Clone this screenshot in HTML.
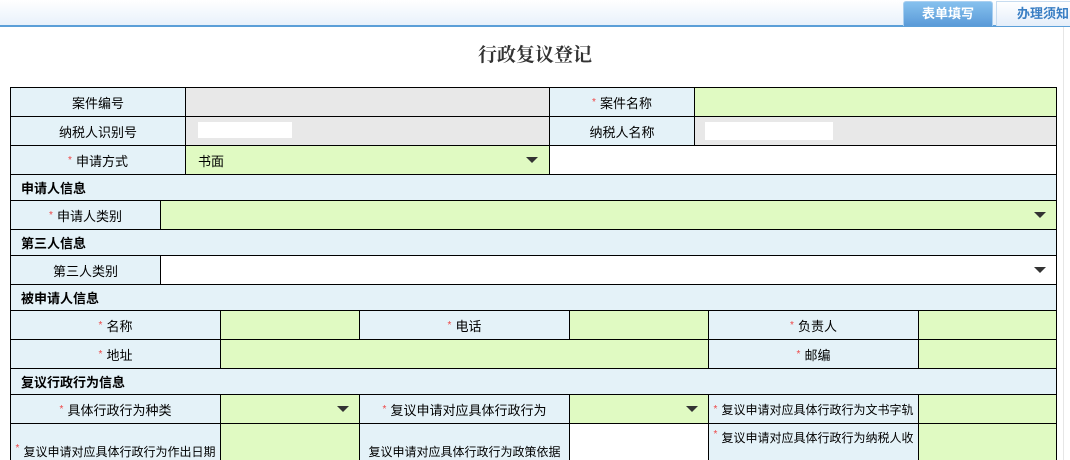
<!DOCTYPE html>
<html><head><meta charset="utf-8"><style>
*{margin:0;padding:0;box-sizing:border-box}
html,body{width:1070px;height:460px;overflow:hidden}
body{background:#fff;font-family:"Liberation Sans","Noto Sans CJK SC",sans-serif;font-size:13px;color:#000;position:relative}
.top{position:absolute;left:0;top:0;width:1070px;height:25px;background:linear-gradient(#fff,#e8f1fb)}
.line{position:absolute;left:0;top:25px;width:1070px;height:2px;background:#5b9fd8}
.t1{position:absolute;left:903px;top:1px;width:90px;height:25px;background:linear-gradient(#86c1ee,#5a9ad8);border:1px solid #a9cff0;border-bottom:none;border-radius:3px 3px 0 0;color:#fff;font-weight:bold;text-align:center;line-height:24px;font-size:13px}
.t2{position:absolute;left:996px;top:1px;width:80px;height:25px;background:linear-gradient(#fff,#e4eefa);border:1px solid #c7dcf0;border-bottom:none;color:#3a7fc4;font-weight:bold;line-height:24px;padding-left:20px;font-size:13px}
h1{position:absolute;left:0;width:1070px;top:40px;text-align:center;font-size:19px;font-weight:bold;color:#333;font-family:"Liberation Serif","Noto Serif CJK SC",serif}
.c{position:absolute;border:1px solid #000;display:flex;align-items:center;justify-content:center;white-space:nowrap;overflow:hidden}
.l{background:#e4f2f8}.g{background:#e0fac2}.y{background:#e8e8e8}.w{background:#fff}
.s{background:#e4f2f8;justify-content:flex-start;padding-left:10px;font-weight:bold}
.r{color:#e44;font-size:10px;margin-right:4px}
.sm{font-size:12px;letter-spacing:0}
.dd{position:absolute;width:0;height:0;border-left:6px solid transparent;border-right:6px solid transparent;border-top:6px solid #333}
.wb{position:absolute;background:#fff}
</style></head><body>
<div class="top"></div><div class="line"></div>
<div class="t1">表单填写</div><div class="t2">办理须知</div>
<div style="position:absolute;left:1063px;top:27px;width:1px;height:433px;background:#e6e6e6"></div>
<h1>行政复议登记</h1>

<div class="c l" style="left:10px;top:87px;width:176px;height:30px">案件编号</div>
<div class="c y" style="left:185px;top:87px;width:365px;height:30px"></div>
<div class="c l" style="left:549px;top:87px;width:146px;height:30px"><span class="r">*</span>案件名称</div>
<div class="c g" style="left:694px;top:87px;width:363px;height:30px"></div>

<div class="c l" style="left:10px;top:116px;width:176px;height:30px">纳税人识别号</div>
<div class="c y" style="left:185px;top:116px;width:365px;height:30px"></div>
<div class="wb" style="left:198px;top:122px;width:94px;height:16px"></div>
<div class="c l" style="left:549px;top:116px;width:146px;height:30px">纳税人名称</div>
<div class="c y" style="left:694px;top:116px;width:363px;height:30px"></div>
<div class="wb" style="left:705px;top:122px;width:128px;height:18px"></div>

<div class="c l" style="left:10px;top:145px;width:176px;height:30px"><span class="r">*</span>申请方式</div>
<div class="c g" style="left:185px;top:145px;width:365px;height:30px;justify-content:flex-start;padding-left:12px">书面</div>
<div class="dd" style="left:526px;top:157px"></div>
<div class="c w" style="left:549px;top:145px;width:508px;height:30px"></div>

<div class="c s" style="left:10px;top:174px;width:1047px;height:27px">申请人信息</div>
<div class="c l" style="left:10px;top:200px;width:151px;height:30px"><span class="r">*</span>申请人类别</div>
<div class="c g" style="left:160px;top:200px;width:897px;height:30px"></div>
<div class="dd" style="left:1034px;top:212px"></div>

<div class="c s" style="left:10px;top:229px;width:1047px;height:27px">第三人信息</div>
<div class="c l" style="left:10px;top:255px;width:151px;height:30px">第三人类别</div>
<div class="c w" style="left:160px;top:255px;width:897px;height:30px"></div>
<div class="dd" style="left:1034px;top:267px"></div>

<div class="c s" style="left:10px;top:284px;width:1047px;height:27px">被申请人信息</div>
<div class="c l" style="left:10px;top:310px;width:211px;height:30px"><span class="r">*</span>名称</div>
<div class="c g" style="left:220px;top:310px;width:140px;height:30px"></div>
<div class="c l" style="left:359px;top:310px;width:211px;height:30px"><span class="r">*</span>电话</div>
<div class="c g" style="left:569px;top:310px;width:140px;height:30px"></div>
<div class="c l" style="left:708px;top:310px;width:211px;height:30px"><span class="r">*</span>负责人</div>
<div class="c g" style="left:918px;top:310px;width:139px;height:30px"></div>

<div class="c l" style="left:10px;top:339px;width:211px;height:30px"><span class="r">*</span>地址</div>
<div class="c g" style="left:220px;top:339px;width:489px;height:30px"></div>
<div class="c l" style="left:708px;top:339px;width:211px;height:30px"><span class="r">*</span>邮编</div>
<div class="c g" style="left:918px;top:339px;width:139px;height:30px"></div>

<div class="c s" style="left:10px;top:368px;width:1047px;height:27px">复议行政行为信息</div>
<div class="c l" style="left:10px;top:394px;width:211px;height:30px"><span class="r">*</span>具体行政行为种类</div>
<div class="c g" style="left:220px;top:394px;width:140px;height:30px"></div>
<div class="dd" style="left:337px;top:406px"></div>
<div class="c l" style="left:359px;top:394px;width:211px;height:30px"><span class="r">*</span>复议申请对应具体行政行为</div>
<div class="c g" style="left:569px;top:394px;width:140px;height:30px"></div>
<div class="dd" style="left:686px;top:406px"></div>
<div class="c l sm" style="left:708px;top:394px;width:211px;height:30px"><span class="r">*</span>复议申请对应具体行政行为文书字轨</div>
<div class="c g" style="left:918px;top:394px;width:139px;height:30px"></div>

<div class="c l sm" style="left:10px;top:423px;width:211px;height:60px;align-items:flex-start;padding-top:19px"><span class="r">*</span>复议申请对应具体行政行为作出日期</div>
<div class="c g" style="left:220px;top:423px;width:140px;height:60px"></div>
<div class="c l sm" style="left:359px;top:423px;width:211px;height:60px;align-items:flex-start;padding-top:19px">复议申请对应具体行政行为政策依据</div>
<div class="c w" style="left:569px;top:423px;width:140px;height:60px"></div>
<div class="c l sm" style="left:708px;top:423px;width:211px;height:60px;align-items:flex-start;padding-top:5px"><span class="r">*</span>复议申请对应具体行政行为纳税人收</div>
<div class="c g" style="left:918px;top:423px;width:139px;height:60px"></div>
</body></html>
